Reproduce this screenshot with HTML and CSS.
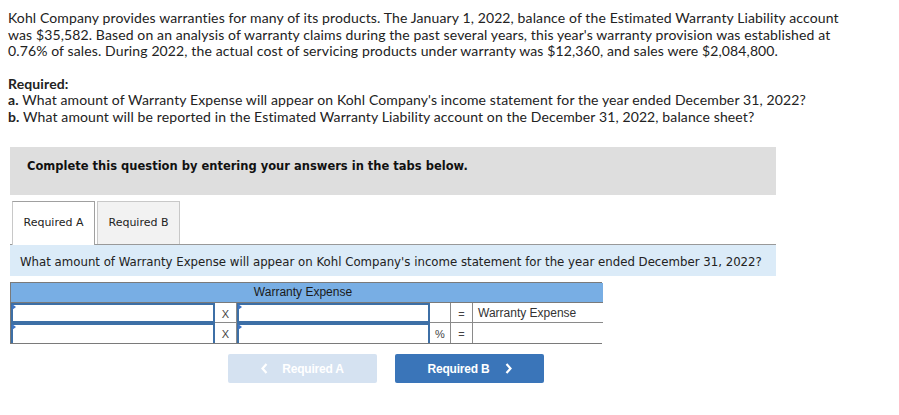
FILE: index.html
```html
<!DOCTYPE html>
<html>
<head>
<meta charset="utf-8">
<link rel="stylesheet" href="styles.css">
</head>
<body>
<div class="intro">
  <p>Kohl Company provides warranties for many of its products. The January 1, 2022, balance of the Estimated Warranty Liability account was $35,582. Based on an analysis of warranty claims during the past several years, this year's warranty provision was established at 0.76% of sales. During 2022, the actual cost of servicing products under warranty was $12,360, and sales were $2,084,800.</p>
  <div class="required">
    <p class="req-title">Required:</p>
    <p><b>a.</b> What amount of Warranty Expense will appear on Kohl Company's income statement for the year ended December 31, 2022?</p>
    <p><b>b.</b> What amount will be reported in the Estimated Warranty Liability account on the December 31, 2022, balance sheet?</p>
  </div>
</div>
<div class="panel">
  <div class="instructions">Complete this question by entering your answers in the tabs below.</div>
  <div class="tabs">
    <div class="tab active">Required A</div>
    <div class="tab">Required B</div>
  </div>
  <div class="question">What amount of Warranty Expense will appear on Kohl Company's income statement for the year ended December 31, 2022?</div>
  <div class="grid">
    <div class="head">Warranty Expense</div>
    <div class="cell input"></div>
    <div class="cell op">X</div>
    <div class="cell input"></div>
    <div class="cell op"></div>
    <div class="cell op">=</div>
    <div class="cell label">Warranty Expense</div>
    <div class="cell input"></div>
    <div class="cell op">X</div>
    <div class="cell input"></div>
    <div class="cell op">%</div>
    <div class="cell op">=</div>
    <div class="cell label"></div>
  </div>
  <div class="nav">
    <div class="btn prev"><svg class="chev" width="7" height="11" viewBox="0 0 7 11"><path d="M5.5 1 L1.5 5.5 L5.5 10" fill="none" stroke="#fff" stroke-width="2.2"/></svg>Required A</div>
    <div class="btn next">Required B<svg class="chev" width="7" height="11" viewBox="0 0 7 11"><path d="M1.5 1 L5.5 5.5 L1.5 10" fill="none" stroke="#fff" stroke-width="2.2"/></svg></div>
  </div>
</div>
</body>
</html>
```
FILE: styles.css
```css
body {
  margin: 0;
  padding: 10px 8px 0 8px;
  font-family: Lato, "Liberation Sans", sans-serif;
  font-size: 14px;
  color: #222;
}
.intro {
  width: 845px;
  letter-spacing: 0.12px;
}
.intro p {
  margin: 0;
  line-height: 16.5px;
}
.required {
  margin-top: 16px;
}
.required p.req-title {
  font-weight: bold;
}
.panel {
  margin-left: 2px;
  width: 766px;
  font-family: "DejaVu Sans", Verdana, sans-serif;
}
.instructions {
  margin-top: 22px;
  height: 48px;
  box-sizing: border-box;
  background: #dedede;
  padding: 12px 0 0 17px;
  font-size: 11.5px;
  font-weight: bold;
  color: #111;
}
.tabs {
  display: flex;
  gap: 2px;
  margin-top: 6px;
  padding-left: 2px;
}
.tab {
  width: 83px;
  height: 43px;
  box-sizing: border-box;
  display: flex;
  align-items: center;
  justify-content: center;
  padding-bottom: 2px;
  font-size: 11px;
  color: #222;
  border: 1px solid #c8c8c8;
  border-bottom: none;
  background: #f2f2f2;
}
.tab.active {
  background: #fff;
  border-color: #a0a0a0;
  border-left-color: #c8c8c8;
  height: 44px;
  margin-bottom: -1px;
  position: relative;
}
.question {
  height: 32px;
  box-sizing: border-box;
  border-top: 1px solid #999;
  background: #dbebf8;
  padding: 10px 0 0 10px;
  font-size: 11.75px;
  color: #222;
}
.grid {
  margin-top: 6px;
  width: 592px;
  display: grid;
  grid-template-columns: 204px 22px 193px 21px 22px 130px;
  grid-template-rows: 20px 20px 20px;
  border: 1px solid #7a7a7a;
  box-sizing: border-box;
  font-family: "Liberation Sans", Arial, sans-serif;
  font-size: 12px;
  color: #333;
}
.head {
  grid-column: 1 / 7;
  background: #78aee4;
  border-bottom: 1px solid #7a7a7a;
  text-align: center;
  line-height: 19px;
  color: #1a1a1a;
  padding-right: 8px;
}
.cell {
  box-sizing: border-box;
  border-right: 1px solid #8a8a8a;
  border-bottom: 1px solid #8a8a8a;
  display: flex;
  align-items: center;
  background: #fff;
}
.cell:nth-child(7), .cell:nth-child(13) {
  border-right: none;
}
.cell:nth-child(n+8) {
  border-bottom: none;
}
.input {
  border: 2px solid #3d6fa6;
  position: relative;
}
.input::before {
  content: "";
  position: absolute;
  left: -1px;
  top: -1px;
  border-left: 4px solid #3d74c4;
  border-top: 3px solid transparent;
  border-bottom: 3px solid transparent;
}
.op {
  justify-content: center;
  font-size: 11px;
  color: #444;
  padding-top: 2px;
}
.label {
  padding-left: 5px;
}
.nav {
  display: flex;
  gap: 18px;
  margin-top: 10px;
  padding-left: 218px;
}
.btn {
  width: 149px;
  height: 29px;
  border-radius: 2px;
  display: flex;
  align-items: center;
  justify-content: center;
  font-family: "Liberation Sans", Arial, sans-serif;
  font-size: 12px;
  font-weight: bold;
  color: #fff;
  letter-spacing: -0.2px;
}
.btn.prev {
  background: #d5e2f1;
}
.btn.next {
  background: #3a75b9;
}
.chev {
  display: block;
}
.prev .chev {
  margin-right: 14px;
}
.next .chev {
  margin-left: 15px;
}
```
